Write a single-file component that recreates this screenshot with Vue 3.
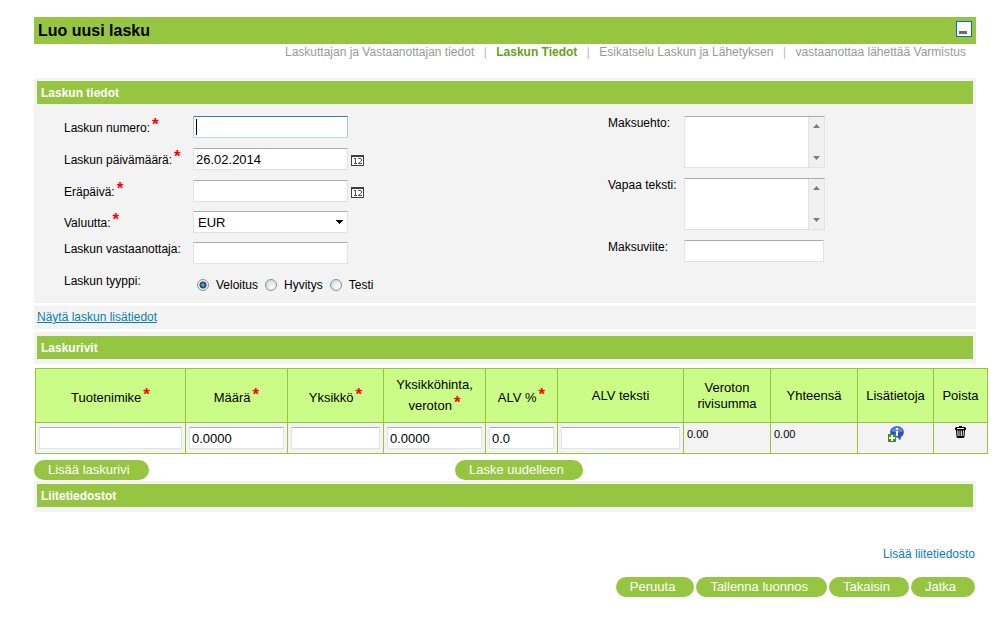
<script setup>
import { ref } from 'vue'

const steps = [
  { label: 'Laskuttajan ja Vastaanottajan tiedot', current: false },
  { label: 'Laskun Tiedot', current: true },
  { label: 'Esikatselu Laskun ja Lähetyksen', current: false },
  { label: 'vastaanottaa lähettää Varmistus', current: false },
]

const columns = [
  { label: 'Tuotenimike', required: true, width: 'w-name' },
  { label: 'Määrä', required: true, width: 'w-amount' },
  { label: 'Yksikkö', required: true, width: 'w-unit' },
  { label: 'Yksikköhinta, veroton', required: true, width: 'w-amount' },
  { label: 'ALV %', required: true, width: 'w-vat' },
  { label: 'ALV teksti', required: false, width: 'w-vattext' },
  { label: 'Veroton rivisumma', required: false, width: 'w-sum' },
  { label: 'Yhteensä', required: false, width: 'w-sum' },
  { label: 'Lisätietoja', required: false, width: 'w-info' },
  { label: 'Poista', required: false, width: 'w-delete' },
]

const types = ['Veloitus', 'Hyvitys', 'Testi']
const actions = ['Peruuta', 'Tallenna luonnos', 'Takaisin', 'Jatka']

const number = ref('')
const date = ref('26.02.2014')
const dueDate = ref('')
const currency = ref('EUR')
const receiver = ref('')
const type = ref('Veloitus')
const terms = ref('')
const freeText = ref('')
const reference = ref('')
const cells = ref(['', '0.0000', '', '0.0000', '0.0', ''])
</script>

<template>
  <main class="page">
    <header class="titlebar">
      <h1>Luo uusi lasku</h1>
      <button type="button" class="minimize" aria-label="Pienennä"><span></span></button>
    </header>

    <nav class="steps">
      <template v-for="(step, i) in steps" :key="step.label">
        <span v-if="i" class="divider">|</span>
        <span :class="{ current: step.current }">{{ step.label }}</span>
      </template>
    </nav>

    <section class="panel details">
      <h2>Laskun tiedot</h2>
      <div class="form">
        <div class="column">
          <div class="field">
            <label for="number" class="label low">Laskun numero:<b class="star">*</b></label>
            <span class="caretbox">
              <input id="number" v-model="number" type="text" class="box focused" />
              <i class="caret"></i>
            </span>
          </div>
          <div class="field">
            <label for="date" class="label low">Laskun päivämäärä:<b class="star">*</b></label>
            <input id="date" v-model="date" type="text" class="box" />
            <button type="button" class="calendar" aria-label="Valitse päivämäärä">
              <svg width="13" height="11" viewBox="0 0 13 11" shape-rendering="crispEdges">
                <path d="M0 0h13v11H0z" fill="#3c4043" />
                <path d="M1 2h11v8H1z" fill="#fff" />
                <path d="M3 3h2v5h1v1H3V8h1V4H3zM7 3h3v1H7zM10 4h1v2h-1zM9 6h1v1H9zM8 7h1v1H8zM7 8h4v1H7z" fill="#555" />
              </svg>
            </button>
          </div>
          <div class="field compact">
            <label for="due" class="label low">Eräpäivä:<b class="star">*</b></label>
            <input id="due" v-model="dueDate" type="text" class="box" />
            <button type="button" class="calendar" aria-label="Valitse eräpäivä">
              <svg width="13" height="11" viewBox="0 0 13 11" shape-rendering="crispEdges">
                <path d="M0 0h13v11H0z" fill="#3c4043" />
                <path d="M1 2h11v8H1z" fill="#fff" />
                <path d="M3 3h2v5h1v1H3V8h1V4H3zM7 3h3v1H7zM10 4h1v2h-1zM9 6h1v1H9zM8 7h1v1H8zM7 8h4v1H7z" fill="#555" />
              </svg>
            </button>
          </div>
          <div class="field compact">
            <label for="currency" class="label low">Valuutta:<b class="star">*</b></label>
            <span class="selectbox">
              <select id="currency" v-model="currency" class="box">
                <option>EUR</option>
              </select>
              <svg class="arrow" width="7" height="4" viewBox="0 0 7 4" shape-rendering="crispEdges">
                <path d="M0 0h7v1H6v1H5v1H4v1H3V3H2V2H1V1H0z" fill="#000" />
              </svg>
            </span>
          </div>
          <div class="field">
            <label for="receiver" class="label">Laskun vastaanottaja:</label>
            <input id="receiver" v-model="receiver" type="text" class="box" />
          </div>
          <div class="field last" role="radiogroup" aria-labelledby="type-label">
            <span id="type-label" class="label">Laskun tyyppi:</span>
            <div class="radios">
              <label v-for="t in types" :key="t">
                <input v-model="type" type="radio" name="type" :value="t" />{{ t }}
              </label>
            </div>
          </div>
        </div>

        <div class="column right">
          <div class="field tall">
            <label for="terms" class="label">Maksuehto:</label>
            <div class="area">
              <textarea id="terms" v-model="terms"></textarea>
              <span class="track" aria-hidden="true">
                <svg width="7" height="4" viewBox="0 0 7 4"><path d="M3.5 0L7 4H0z" fill="#7d7d7d" /></svg>
                <svg width="7" height="4" viewBox="0 0 7 4"><path d="M0 0h7L3.5 4z" fill="#7d7d7d" /></svg>
              </span>
            </div>
          </div>
          <div class="field tall">
            <label for="free" class="label">Vapaa teksti:</label>
            <div class="area">
              <textarea id="free" v-model="freeText"></textarea>
              <span class="track" aria-hidden="true">
                <svg width="7" height="4" viewBox="0 0 7 4"><path d="M3.5 0L7 4H0z" fill="#7d7d7d" /></svg>
                <svg width="7" height="4" viewBox="0 0 7 4"><path d="M0 0h7L3.5 4z" fill="#7d7d7d" /></svg>
              </span>
            </div>
          </div>
          <div class="field">
            <label for="reference" class="label">Maksuviite:</label>
            <input id="reference" v-model="reference" type="text" class="box short" />
          </div>
        </div>
      </div>
    </section>

    <div class="more"><a href="#">Näytä laskun lisätiedot</a></div>

    <section class="panel rows"><h2>Laskurivit</h2></section>

    <table class="lines">
      <colgroup>
        <col v-for="c in columns" :key="c.label" :class="c.width" />
      </colgroup>
      <thead>
        <tr>
          <th v-for="c in columns" :key="c.label" scope="col">
            {{ c.label }}<b v-if="c.required" class="star">*</b>
          </th>
        </tr>
      </thead>
      <tbody>
        <tr>
          <td v-for="(cell, i) in cells" :key="i" class="edit">
            <input v-model="cells[i]" type="text" class="box" :aria-label="columns[i].label" />
          </td>
          <td class="total">0.00</td>
          <td class="total">0.00</td>
          <td class="icon">
            <button type="button" aria-label="Lisätietoja">
              <svg width="16" height="16" viewBox="0 0 16 16">
                <path d="M9 .2c4 0 6.8 2.600 6.800 5.800 0 2.500-1.300 4.200-3 5.100.1 1.200-.2 2.200-.8 3.100-.8-.6-1.600-1.500-2-2.600C5 11.800 2.200 9.300 2.200 6 2.200 2.800 5 .2 9 .2z" fill="#2b50c0" />
                <path d="M9 1c3.300 0 5.500 1.800 5.900 4.200C12.500 6.500 7 7 3.200 5.300 3.600 2.800 5.700 1 9 1z" fill="#5c86e2" />
                <path d="M8 2h2v2H8zM8 5h2v5H8z" fill="#fff" />
                <path d="M0 8h8v8H0z" fill="#3b9420" />
                <path d="M3 9h2v2h2v2H5v2H3v-2H1v-2h2z" fill="#fff" />
              </svg>
            </button>
          </td>
          <td class="icon">
            <button type="button" aria-label="Poista">
              <svg width="11" height="12" viewBox="0 0 11 12">
                <path d="M4 0h3v1h3l1 1v2h-1l-.5 7-1 1h-6l-1-1L1 4H0V2l1-1h3z" fill="#000" />
                <path d="M2 2h7v1H2zM2.300 4.500h1l.3 5.500h-1zM4.500 4.500h.8V10h-.8zM6.200 4.500H7V10h-.8zM8 4.500h.9L8.500 10h-.8z" fill="#fff" />
              </svg>
            </button>
          </td>
        </tr>
      </tbody>
    </table>

    <div class="linebuttons">
      <button type="button" class="pill">Lisää laskurivi</button>
      <button type="button" class="pill">Laske uudelleen</button>
    </div>

    <section class="panel files"><h2>Liitetiedostot</h2></section>

    <div class="attach"><a href="#">Lisää liitetiedosto</a></div>

    <footer class="actions">
      <button v-for="a in actions" :key="a" type="button" class="pill">{{ a }}</button>
    </footer>
  </main>
</template>

<style>
body {
  background: #fff;
}
</style>

<style scoped>
.page {
  padding: 17px 28px 16px 34px;
  font: 12px/16px "Liberation Sans", Arial, sans-serif;
  color: #000;
}
.page * {
  box-sizing: border-box;
}
button {
  border: 0;
  padding: 0;
  background: none;
  font-family: inherit;
  cursor: pointer;
}
svg {
  display: block;
}
.titlebar {
  display: flex;
  align-items: center;
  justify-content: space-between;
  height: 27px;
  padding: 0 4px;
  background: #96c541;
}
h1 {
  margin: 0;
  font-size: 16px;
  line-height: 20px;
}
.minimize {
  display: flex;
  align-items: flex-end;
  width: 16px;
  height: 16px;
  margin-bottom: 3px;
  padding: 2px;
  border: 1px solid #0a6ebd;
  background: #fff;
}
.minimize span {
  width: 8px;
  height: 3px;
  background: #6b6a70;
}
.steps {
  display: flex;
  justify-content: flex-end;
  padding-right: 10px;
  margin-bottom: 18px;
  color: #999;
}
.steps .divider {
  width: 22px;
  text-align: center;
  color: #bbb;
}
.steps .current {
  font-weight: bold;
  color: #669f1c;
}
.panel {
  padding: 3px;
  background: #f3f3f3;
}
h2 {
  margin: 0;
  padding: 5px 4px 3px;
  font-size: 12px;
  line-height: 15px;
  color: #fff;
  background: #96c541;
}
.form {
  display: grid;
  grid-template-columns: 544fr 365fr;
  padding: 12px 0 0 27px;
}
.field {
  display: flex;
  align-items: flex-start;
  height: 32px;
}
.compact {
  height: 31px;
}
.last {
  height: 26px;
}
.tall {
  height: 62px;
}
.label {
  width: 129px;
  flex: none;
  line-height: 14px;
  white-space: nowrap;
}
.label.low {
  padding-top: 5px;
}
.right .label {
  width: 76px;
}
.star {
  margin-left: 2px;
  font-size: 17px;
  line-height: 0;
  vertical-align: 2px;
  color: #f00;
}
.box {
  width: 155px;
  height: 22px;
  padding: 0 2px;
  border: 1px solid #e2e3ea;
  border-top-color: #abadb3;
  border-radius: 1px;
  background: #fff;
  font: 13px "Liberation Sans", Arial, sans-serif;
  color: #000;
  outline: none;
}
.box.focused {
  border-color: #3d7bad #a4c9e3 #b7d9ed #b5cfe7;
}
.box.short {
  width: 140px;
}
.caretbox,
.selectbox {
  position: relative;
  display: flex;
}
.caret {
  position: absolute;
  left: 3px;
  top: 3px;
  width: 1px;
  height: 16px;
  background: #000;
}
select.box {
  appearance: none;
  padding: 0 4px;
}
.arrow {
  position: absolute;
  right: 5px;
  top: 9px;
  pointer-events: none;
}
.calendar {
  margin: 7px 0 0 3px;
}
.radios {
  display: flex;
  gap: 7px;
  padding: 3px 0 0 4px;
}
.radios label {
  display: flex;
  align-items: center;
  gap: 7px;
}
.radios input {
  appearance: none;
  width: 12px;
  height: 12px;
  margin: 0;
  border: 1px solid #8e8f8f;
  border-radius: 50%;
  background: radial-gradient(circle at 65% 65%, #fff, #c9cdd2);
}
.radios input:checked {
  background: radial-gradient(circle, #6fc3e8 0, #12405f 3px, #f0f0f0 4px);
}
.area {
  display: flex;
  width: 141px;
  height: 52px;
  border: 1px solid #e2e3ea;
  border-top-color: #abadb3;
  background: #fff;
}
.area textarea {
  flex: 1;
  min-width: 0;
  border: 0;
  padding: 2px;
  resize: none;
  outline: none;
  scrollbar-width: none;
  background: #fff;
  font: 13px "Liberation Sans", Arial, sans-serif;
}
.track {
  display: flex;
  flex-direction: column;
  align-items: center;
  justify-content: space-between;
  width: 16px;
  padding: 7px 0;
  border-left: 1px solid #e3e3e6;
  background: #f0f0f0;
}
.more {
  margin: 3px 0;
  padding: 3px 3px 4px;
  background: #f3f3f3;
}
a {
  color: #0b7fb0;
}
.rows {
  padding: 4px 3px 5px;
}
.lines {
  width: calc(100% + 11px);
  margin: 4px 0 6px 1px;
  border-collapse: collapse;
  table-layout: fixed;
}
.w-name { width: 150px; }
.w-amount { width: 102px; }
.w-unit { width: 96px; }
.w-vat { width: 72px; }
.w-vattext { width: 126px; }
.w-sum { width: 87px; }
.w-info { width: 76px; }
.w-delete { width: 54px; }
th,
td {
  border: 1px solid #96c541;
}
th {
  height: 54px;
  padding: 3px 4px;
  font-size: 13px;
  font-weight: normal;
  background: #cbfc87;
}
th .star {
  line-height: 20px;
}
td {
  height: 31px;
  padding: 3px;
  vertical-align: top;
  background: #f3f3f3;
}
.edit {
  padding: 4px 3px;
}
.edit .box {
  display: block;
  width: 100%;
}
.total {
  font-size: 11px;
}
.icon button {
  display: block;
  margin: 0 auto;
}
.linebuttons {
  display: grid;
  grid-template-columns: 421fr 521fr;
  justify-items: start;
  margin-bottom: 1px;
}
.pill {
  height: 20px;
  padding: 0 19px 0 14px;
  border-radius: 10px;
  background: #96c541;
  font-size: 13px;
  line-height: 20px;
  color: #fff;
}
.files {
  padding-bottom: 5px;
}
.attach {
  margin: 34px 1px 15px;
  text-align: right;
}
.attach a {
  color: #0a7ac8;
  text-decoration: none;
}
.actions {
  display: flex;
  justify-content: flex-end;
  gap: 2px;
  padding-right: 1px;
}
</style>
